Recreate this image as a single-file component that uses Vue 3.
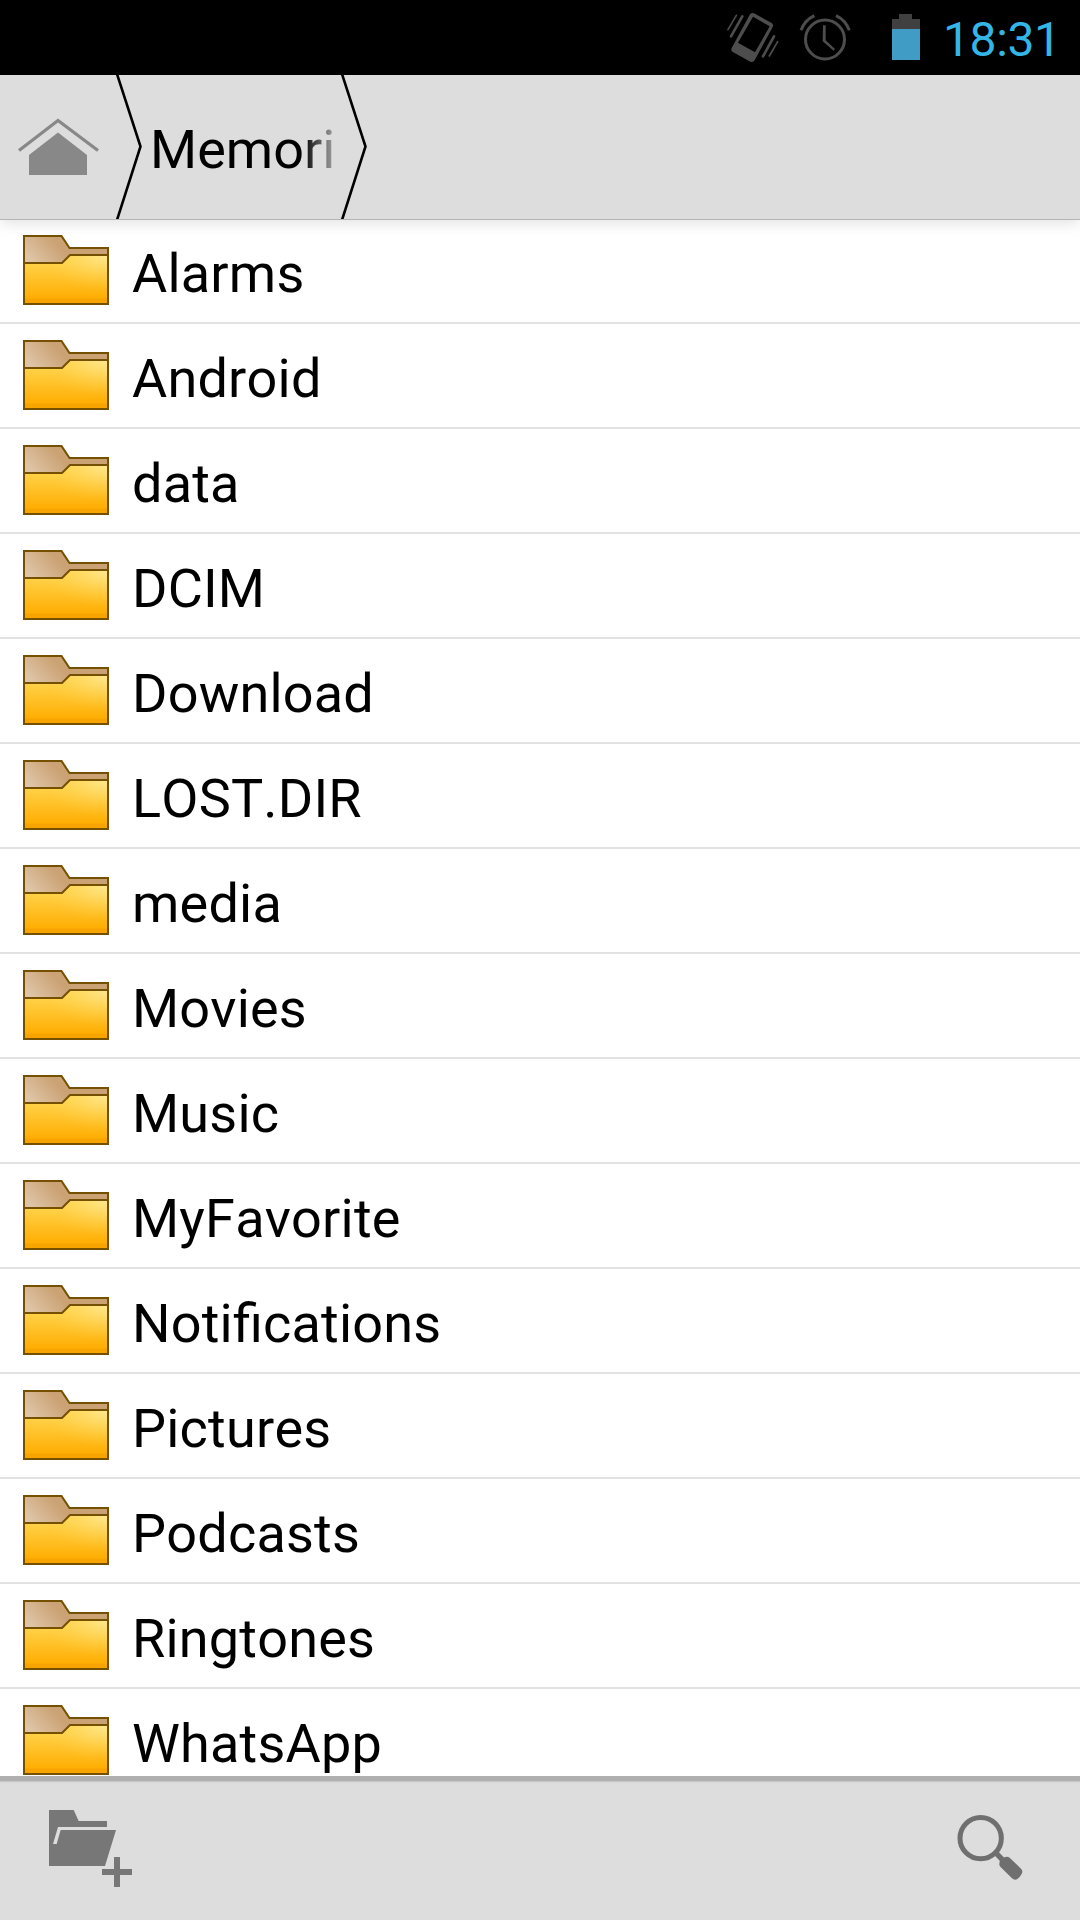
<script setup>
import { ref } from "vue";

const time = ref("18:31");
const currentFolder = ref("Memori");

const folders = ref([
  "Alarms",
  "Android",
  "data",
  "DCIM",
  "Download",
  "LOST.DIR",
  "media",
  "Movies",
  "Music",
  "MyFavorite",
  "Notifications",
  "Pictures",
  "Podcasts",
  "Ringtones",
  "WhatsApp",
]);
</script>

<template>
  <div class="screen">
    <!-- Shared folder gradients -->
    <svg class="defs" width="0" height="0" aria-hidden="true">
      <defs>
        <linearGradient id="folder-back" x1="0" y1="0.6" x2="1" y2="0.3">
          <stop offset="0" stop-color="#dfc5a7" />
          <stop offset="0.45" stop-color="#cba274" />
          <stop offset="1" stop-color="#cba274" />
        </linearGradient>
        <linearGradient id="folder-front" x1="0" y1="0" x2="0" y2="1">
          <stop offset="0" stop-color="#ffd84f" />
          <stop offset="0.2" stop-color="#ffd045" />
          <stop offset="0.88" stop-color="#ffae03" />
          <stop offset="0.9" stop-color="#f7a400" />
          <stop offset="1" stop-color="#f7a400" />
        </linearGradient>
        <radialGradient id="folder-shine" cx="0.97" cy="0" r="0.75">
          <stop offset="0" stop-color="#ffeb9c" stop-opacity="0.85" />
          <stop offset="1" stop-color="#ffd045" stop-opacity="0" />
        </radialGradient>
      </defs>
    </svg>

    <!-- Status bar -->
    <header class="status-bar">
      <svg class="vibrate" viewBox="80 36 156 153" width="52" height="51">
        <path
          fill="#4d4d4d"
          fill-rule="evenodd"
          d="M149 43Q154 37 161 40L214 69Q221 74 217 81L163 181Q158 188 150 185L96 155Q91 151 94 144ZM158 50L113 128L164 157L208 79Z"
        />
        <g stroke="#4d4d4d" stroke-linecap="round">
          <path stroke-width="5" d="M83 89L108 46M207 168L232 125" />
          <path stroke-width="8" d="M92 109L126 49M188 169L221 109" />
        </g>
      </svg>
      <svg class="alarm" viewBox="298 38 159 147" width="53" height="49">
        <g fill="none" stroke="#4d4d4d" stroke-width="9">
          <circle cx="376" cy="117.500" r="58.500" />
          <path d="M304 90Q315 60 344 46M449 90Q438 60 409 46" />
        </g>
        <path fill="#4d4d4d" d="M370 75H378V120L406 146L402 151L369 123Z" />
      </svg>
      <svg class="battery" viewBox="0 0 28 46" width="28" height="46">
        <path fill="#404040" d="M7 0H20V5H28V15H0V5H7Z" />
        <path fill="#409cc4" d="M0 15H28V46H0Z" />
      </svg>
      <span class="clock">{{ time }}</span>
    </header>

    <!-- Breadcrumbs -->
    <nav class="breadcrumbs">
      <svg class="home" viewBox="17 118 83 58" width="83" height="58">
        <path
          d="M19 150.500L58 120.500L98 150.500"
          fill="none"
          stroke="#888"
          stroke-width="3.200"
        />
        <path fill="#888" d="M29 155L58 132.500L87 155V175H29Z" />
      </svg>
      <svg class="chevron" viewBox="0 0 28 144" width="28" height="144">
        <path d="M2 -1L25.500 71.500L2 145" />
      </svg>
      <span class="crumb">{{ currentFolder }}</span>
      <svg class="chevron" viewBox="0 0 28 144" width="28" height="144">
        <path d="M2 -1L25.500 71.500L2 145" />
      </svg>
    </nav>

    <!-- Folder list -->
    <ul class="list">
      <li v-for="folder in folders" :key="folder" class="row">
        <svg class="folder" viewBox="0 0 86 70" width="86" height="70">
          <path
            fill="url(#folder-back)"
            d="M1 1H38.500L46.500 13H85V30H1Z"
          />
          <path
            fill="url(#folder-front)"
            d="M1 28H39L47 20H85V69H1Z"
          />
          <path
            fill="url(#folder-shine)"
            d="M1 28H39L47 20H85V69H1Z"
          />
          <path
            fill="none"
            stroke="#755000"
            stroke-width="2"
            d="M1 1H38.500L46.500 13H85V69H1ZM1 28H39L47 20H85"
          />
        </svg>
        <span class="name">{{ folder }}</span>
      </li>
    </ul>

    <!-- Bottom actions -->
    <footer class="toolbar">
      <svg viewBox="147 360 252 234" width="84" height="78">
        <path
          fill="#777"
          d="M147 360H221L236 393H321V411H174L159 462H170L182 420H348L315 528H147Z"
        />
        <path fill="#777" d="M342 501H360V537H396V555H360V591H342V555H306V537H342Z" />
      </svg>
      <svg class="search" viewBox="111 162 201 201" width="67" height="67">
        <circle
          cx="182"
          cy="234.500"
          r="62"
          fill="none"
          stroke="#6f6f6f"
          stroke-width="15"
        />
        <path stroke="#6f6f6f" stroke-width="16" d="M226 277L250 302" />
        <path
          fill="#6f6f6f"
          d="M251 293Q261 287 269 293L303 326Q310 333 305 342Q300 352 291 358Q283 362 276 355L241 320Q236 315 239 307V303Z"
        />
      </svg>
    </footer>
  </div>
</template>

<style>
body {
  margin: 0;
  overflow: hidden;
}
</style>

<style scoped>
.screen {
  display: flex;
  flex-direction: column;
  width: 1080px;
  height: 1920px;
  overflow: hidden;
  background: #fff;
  color: #000;
  font-family: Roboto, "Noto Sans", sans-serif;
}

.defs {
  position: absolute;
}

svg {
  display: block;
  flex-shrink: 0;
}

/* Status bar */
.status-bar {
  display: flex;
  justify-content: flex-end;
  align-items: flex-start;
  flex-shrink: 0;
  box-sizing: border-box;
  height: 75px;
  padding-right: 24px;
  background: #000;
}

.vibrate {
  margin-top: 12px;
}

.alarm {
  margin: 13px 0 0 20px;
}

.battery {
  margin: 14px 0 0 40px;
}

.clock {
  width: 113px;
  margin-left: 23px;
  padding-top: 5px;
  color: #33b5e5;
  font-size: 48px;
  line-height: 70px;
  letter-spacing: -0.4px;
  white-space: nowrap;
}

/* Breadcrumbs */
.breadcrumbs {
  display: flex;
  align-items: flex-start;
  flex-shrink: 0;
  position: relative;
  z-index: 1;
  height: 144px;
  padding-left: 17px;
  background: #ddd;
  box-shadow:
    0 1px 0 #b5b5b5,
    0 4px 14px rgba(0, 0, 0, 0.12);
}

.home {
  margin-top: 43px;
}

.chevron {
  margin-left: 15px;
}

.chevron path {
  fill: none;
  stroke: #000;
  stroke-width: 2.6;
}

.crumb {
  width: 190px;
  margin-left: 7px;
  padding-top: 3px;
  font-size: 54px;
  line-height: 144px;
  letter-spacing: 0;
  white-space: nowrap;
  mask-image: linear-gradient(to right, #000 152px, transparent 196px);
}

.crumb + .chevron {
  margin-left: 0;
}

/* List */
.list {
  flex: 1;
  min-height: 0;
  margin: 0;
  padding: 0;
  overflow: hidden;
  list-style: none;
}

.row {
  display: flex;
  align-items: flex-start;
  box-sizing: border-box;
  height: 105px;
  padding-left: 23px;
  border-bottom: 2px solid #e2e2e2;
}

.folder {
  margin-top: 16px;
}

.name {
  margin-left: 23px;
  padding-top: 3px;
  font-size: 54px;
  line-height: 103px;
  letter-spacing: 0.2px;
  font-kerning: none;
  font-feature-settings: "liga" 1;
  white-space: nowrap;
}

/* Toolbar */
.toolbar {
  display: flex;
  justify-content: space-between;
  align-items: flex-start;
  flex-shrink: 0;
  box-sizing: border-box;
  height: 144px;
  padding: 34px 56px 0 49px;
  background: linear-gradient(
    to bottom,
    #b0b0b0 5px,
    #c0c0c0 5px,
    #d0d0d0 6px,
    #ddd 7px
  );
}

.search {
  margin-top: 4px;
}
</style>
